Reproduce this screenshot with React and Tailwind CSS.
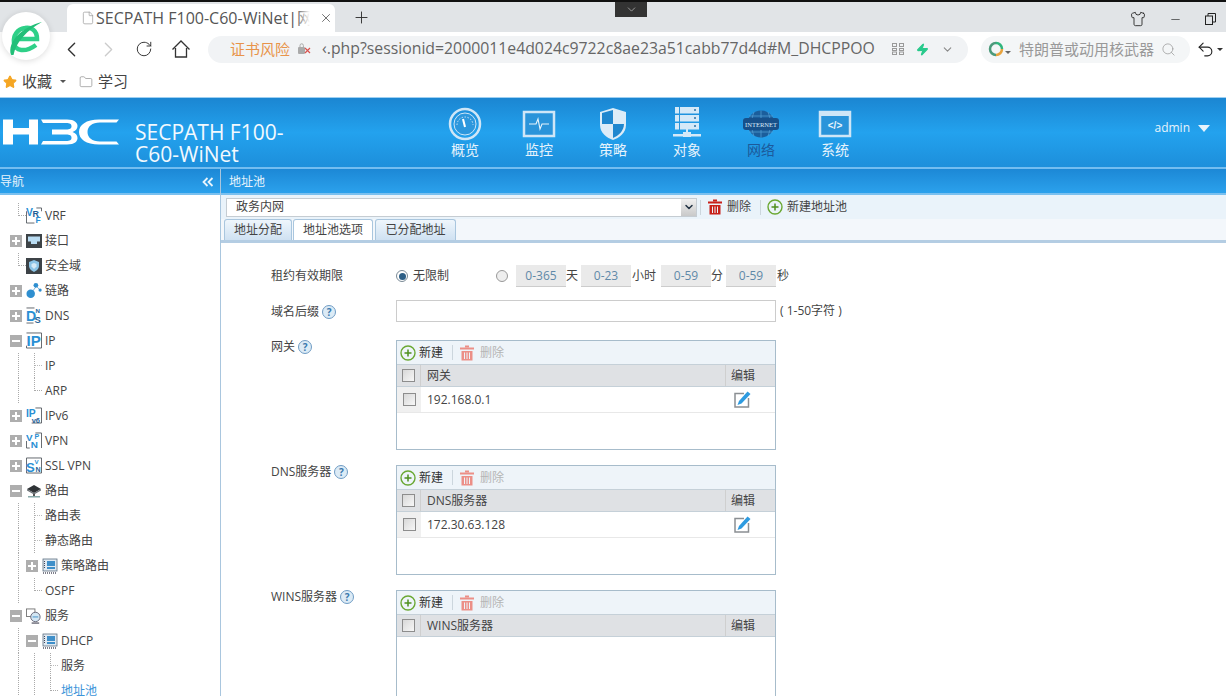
import React from "react";
import { ChevronLeft, ChevronRight, ChevronDown, RotateCw, Star, Folder, File, X, Plus, Minus, Search, Undo2, Zap, Shirt } from "lucide-react";

function Logo360() {
  return (
    <svg width="48" height="48" viewBox="0 0 48 48" className="absolute left-[2px] top-[12px] rounded-full bg-white shadow-[0_1px_6px_rgba(0,0,0,0.14)]">
      <path d="M13 27H35C35 18 29 15 23 16C15 17 11 24 12 31C13 39 23 41 34 33" fill="none" stroke="#2fd088" strokeWidth="4.500" />
      <path d="M9 43C5 30 20 15 40 10C25 18 14 30 11.500 43Z" fill="#22bf78" />
    </svg>
  );
}

function HouseIcon() {
  return (
    <svg width="20" height="20" viewBox="0 0 20 20" fill="none" stroke="#333" strokeWidth="1.300">
      <path d="M1.500 10.500L10 2L18.500 10.500M4.500 9V18H15.500V9" />
    </svg>
  );
}

function QrIcon() {
  return (
    <svg width="12" height="12" viewBox="0 0 12 12" fill="none" stroke="#999" strokeWidth="1">
      <rect x="0.500" y="0.500" width="4" height="3" /><rect x="7.500" y="0.500" width="4" height="3" />
      <rect x="0.500" y="5.500" width="4" height="2" /><rect x="7.500" y="5.500" width="4" height="2" />
      <rect x="0.500" y="9" width="4" height="2.500" /><rect x="7.500" y="9" width="4" height="2.500" />
    </svg>
  );
}

function BrowserChrome() {
  return (
    <div className="relative">
      <div className="h-[2px] bg-[#111]" />
      <div className="flex h-[30px] items-end bg-[#e1e4e7] pl-[67px]">
        <div className="flex h-[28px] w-[268px] items-center rounded-t-md bg-white pl-[14px] text-[16px] text-[#555]">
          <File size={14} strokeWidth={1.200} color="#999" />
          <span className="relative ml-[1px] w-[214px] overflow-hidden whitespace-nowrap">
            SECPATH F100-C60-WiNet|网络
            <span className="absolute inset-y-0 right-0 w-[14px] bg-gradient-to-l from-white to-transparent" />
          </span>
          <X size={14} strokeWidth={1.400} color="#555" className="ml-[9px]" />
        </div>
        <Plus size={19} strokeWidth={1.200} color="#333" className="mb-[5px] ml-[17px]" />
        <div className="flex-1" />
        <div className="mb-[5px] flex items-center gap-[23px] pr-[10px]">
          <Shirt size={16} strokeWidth={1.300} color="#222" />
          <Minus size={13} strokeWidth={1.200} color="#222" />
          <svg width="11" height="12" viewBox="0 0 11 12" fill="none" stroke="#222"><rect x="0.500" y="3" width="7" height="8.500" /><path d="M3 3V0.500H10.500V9H7.500" /></svg>
        </div>
      </div>
      <div className="flex h-[34px] items-center bg-white">
        <ChevronLeft size={25} strokeWidth={1.300} color="#333" className="ml-[59px]" />
        <ChevronRight size={25} strokeWidth={1.300} color="#ccc" className="ml-[12px]" />
        <RotateCw size={18} strokeWidth={1.300} color="#333" className="ml-[14px]" />
        <span className="ml-[18px]"><HouseIcon /></span>
        <div className="ml-[17px] flex h-[27px] w-[760px] items-center rounded-full bg-[#f1f3f5] pl-[22px]">
          <span className="whitespace-nowrap text-[15px] text-[#e8934a]">证书风险</span>
          <svg width="14" height="12" viewBox="0 0 14 12" className="ml-[8px]"><rect x="0" y="4" width="7" height="7" fill="#aaa" rx="1" /><path d="M2 4V2.500a1.700 1.700 0 0 1 3.400 0V4" fill="none" stroke="#aaa" /><path d="M7 5l5 5M12 5l-5 5" stroke="#d9534f" strokeWidth="1.200" /></svg>
          <span className="ml-[10px] w-[555px] overflow-hidden whitespace-nowrap text-[15.800px] text-[#666]">‹.php?sessionid=2000011e4d024c9722c8ae23a51cabb77d4d#M_DHCPPOO</span>
          <span className="ml-[15px]"><QrIcon /></span>
          <Zap size={13} className="ml-[12px]" fill="#27c98b" stroke="#27c98b" />
          <ChevronDown size={13} color="#888" className="ml-[12px]" />
        </div>
        <div className="ml-[13px] flex h-[27px] w-[209px] items-center rounded-full bg-[#f4f6f7] pl-[7px]">
          <svg width="16" height="16" viewBox="0 0 16 16" fill="none" strokeWidth="2.500"><path d="M8 2a6 6 0 0 1 6 6" stroke="#31b57d" /><path d="M14 8a6 6 0 0 1-6 6" stroke="#e8a33d" /><path d="M8 14A6 6 0 0 1 8 2" stroke="#4c9a7b" /></svg>
          <span className="ml-[1px] mt-[6px] h-0 w-0 border-x-[3px] border-t-[3px] border-x-transparent border-t-[#666]" />
          <span className="ml-[8px] whitespace-nowrap text-[15px] text-[#999]">特朗普或动用核武器</span>
          <Search size={15} strokeWidth={1.200} color="#999" className="ml-[7px]" />
        </div>
        <Undo2 size={19} strokeWidth={1.400} color="#222" className="ml-[6px]" />
        <span className="ml-[2px] h-0 w-0 border-x-[3px] border-t-[3px] border-x-transparent border-t-[#333]" />
      </div>
      <div className="flex h-[31px] items-center bg-white pl-[3px] text-[15px] text-[#444]">
        <Star size={14} fill="#f5a623" stroke="#f5a623" />
        <span className="ml-[5px]">收藏</span>
        <span className="ml-[8px] h-0 w-0 border-x-[3px] border-t-[3px] border-x-transparent border-t-[#555]" />
        <Folder size={14} strokeWidth={1} color="#777" className="ml-[13px]" />
        <span className="ml-[5px]">学习</span>
      </div>
      <Logo360 />
      <div className="absolute left-[615px] top-[2px] flex h-[15px] w-[32px] items-center justify-center bg-[#333]">
        <ChevronDown size={13} strokeWidth={1.200} color="#ccc" />
      </div>
    </div>
  );
}

function H3CLogo() {
  return (
    <svg width="120" height="26" viewBox="0 0 120 26" fill="#fff">
      <path d="M3 0.500H13V9H29V0.500H38V25.500H29V15.500H13V25.500H3Z" />
      <path d="M41 0.500H67C75 0.500 77.500 4 77.500 7C77.500 10 75.500 12 72.500 13C75.500 14 77.500 16 77.500 19C77.500 22 75 25.500 67 25.500H41L43 22H66C70 22 71.500 21 71.500 18.800C71.500 16.500 70 15.500 66 15.500H52V10.500H66C70 10.500 71.500 9.500 71.500 7.200C71.500 5 70 4 66 4H43Z" />
      <path d="M119 0.500H99C86 0.500 79 6 79 13C79 20 86 25.500 99 25.500H119L116.500 22.500H100C92 22.500 87.500 18.500 87.500 13C87.500 7.500 92 3.500 100 3.500H116.500Z" />
    </svg>
  );
}

const c1 = "#cfe6f7";
function NavGauge() {
  return (
    <svg width="34" height="34" viewBox="0 0 34 34" fill="none">
      <circle cx="17" cy="17" r="15" stroke={c1} strokeWidth="2.500" />
      <circle cx="17" cy="17" r="11" fill="#2c97dd" stroke={c1} strokeWidth="1" />
      <path d="M9 18a8 8 0 0 1 16 0" stroke={c1} strokeDasharray="1.500 1.500" />
      <path d="M15 12l2 8" stroke="#fff" strokeWidth="2" />
    </svg>
  );
}
function NavMonitor() {
  return (
    <svg width="34" height="30" viewBox="0 0 34 30" fill="none">
      <rect x="2" y="3" width="30" height="24" fill="#2a94da" stroke={c1} strokeWidth="2.500" />
      <path d="M7 15H14L16 10L18 20L20 15H27" stroke="#e8f4fc" strokeWidth="1.100" />
    </svg>
  );
}
function NavShield() {
  return (
    <svg width="28" height="34" viewBox="0 0 28 34">
      <path d="M14 1L27 5V18C27 26 20 31 14 33C8 31 1 26 1 18V5Z" fill="#dcecf8" />
      <path d="M14 5V17H3V6L14 3Z" fill="#1f87cf" />
      <path d="M14 17H25C25 24 19 29 14 31Z" fill="#1f87cf" />
    </svg>
  );
}
function NavServer() {
  return (
    <svg width="28" height="34" viewBox="0 0 28 34" fill="#d5e9f8">
      <rect x="2" y="0" width="24" height="6.500" /><rect x="2" y="8" width="24" height="6.500" /><rect x="2" y="16" width="24" height="6.500" />
      <rect x="6" y="0" width="1" height="23" fill="#2a94da" />
      <circle cx="22" cy="3" r="1" fill="#2a6fa5" /><circle cx="22" cy="11" r="1" fill="#2a6fa5" /><circle cx="22" cy="19" r="1" fill="#2a6fa5" />
      <rect x="13" y="22" width="2" height="5" /><rect x="0" y="27" width="10" height="2.500" /><rect x="10" y="25" width="8" height="5" /><rect x="18" y="27" width="10" height="2.500" />
    </svg>
  );
}
function NavGlobe() {
  return (
    <svg width="36" height="30" viewBox="0 0 36 30" fill="none">
      <circle cx="18" cy="15" r="13.500" fill="#1b5e9c" />
      <path d="M18 1.500V28.500M11 3C8 10 8 20 11 27M25 3C28 10 28 20 25 27M6 7H30M6 23H30" stroke="#58a3d8" strokeWidth="0.700" />
      <rect x="0" y="9" width="36" height="12" rx="3" fill="#17508a" />
      <text x="18" y="17.500" textAnchor="middle" fontSize="6.500" fill="#d9ecf9" fontFamily="Liberation Serif, serif">INTERNET</text>
    </svg>
  );
}
function NavWindow() {
  return (
    <svg width="34" height="30" viewBox="0 0 34 30" fill="none">
      <rect x="2" y="3" width="30" height="24" fill="#2a94da" stroke={c1} strokeWidth="2.500" />
      <rect x="2" y="2" width="30" height="5" fill={c1} />
      <text x="17" y="20" textAnchor="middle" fontSize="10" fontWeight="700" fill="#e8f4fc" fontFamily="Liberation Sans, sans-serif">&lt;/&gt;</text>
    </svg>
  );
}

const navs = [
  { label: "概览", icon: <NavGauge /> },
  { label: "监控", icon: <NavMonitor /> },
  { label: "策略", icon: <NavShield /> },
  { label: "对象", icon: <NavServer /> },
  { label: "网络", icon: <NavGlobe />, active: true },
  { label: "系统", icon: <NavWindow /> },
];

function Header() {
  return (
    <div className="flex h-[72px] items-start border-t border-[#9ed0f2] border-b-2 border-b-[#73bdf0] bg-gradient-to-b from-[#1b86d2] via-[#23a2ee] to-[#1d8fdb]">
      <div className="mt-[21px] shrink-0"><H3CLogo /></div>
      <div className="ml-[15px] mt-[23px] w-[170px] text-[21px] leading-[22px] text-[#f2f9fe]">SECPATH F100-C60-WiNet</div>
      <div className="ml-[123px] flex">
        {navs.map((n) => (
          <div key={n.label} className="flex w-[74px] flex-col items-center">
            <div className="mt-[8px] flex h-[36px] items-center">{n.icon}</div>
            <div className={`-mt-[2px] text-[14px] leading-[20px] ${n.active ? "text-[#1c5a9b]" : "text-[#e6f3fc]"}`}>{n.label}</div>
          </div>
        ))}
      </div>
      <div className="flex-1" />
      <div className="mr-[16px] mt-[21px] flex items-center text-[12px] text-[#e6f3fc]">
        admin
        <span className="ml-[8px] h-0 w-0 border-x-[6px] border-t-[7px] border-x-transparent border-t-[#e6f3fc]" />
      </div>
    </div>
  );
}

function Guide({ kind }) {
  if (kind === "line") return <div className="h-full w-[16px] shrink-0"><div className="ml-[8px] h-full border-l border-dotted border-[#aaa]" /></div>;
  if (kind === "tee") return <div className="h-full w-[16px] shrink-0"><div className="ml-[8px] h-full border-l border-dotted border-[#aaa]"><div className="h-1/2 border-b border-dotted border-[#bbb]" /></div></div>;
  if (kind === "end") return <div className="h-full w-[16px] shrink-0"><div className="ml-[8px] h-1/2 border-b border-l border-dotted border-[#aaa]" /></div>;
  return <div className="w-[16px] shrink-0"><div className="relative h-[12px] w-[12px] bg-[#aeaeae]"><span className="absolute left-[2px] top-[5px] h-[2px] w-[8px] bg-white" />{kind === "plus" && <span className="absolute left-[5px] top-[2px] h-[8px] w-[2px] bg-white" />}</div></div>;
}

const blue = "#2a8fd4";
const navy = "#1f5f96";
function LetterIcon({ letters, frame = "M10 0.500H16.500V16.500H0.500V11" }) {
  return (
    <svg width="17" height="17" viewBox="0 0 17 17" fill="none">
      <path d={frame} stroke="#4a4f55" strokeWidth="0.900" />
      {letters.map(([c, x, y, s, f], i) => (
        <text key={i} x={x} y={y} fontSize={s} fontWeight="700" fill={f || blue} fontFamily="Liberation Sans, sans-serif">{c}</text>
      ))}
    </svg>
  );
}
const IconIf = () => (
  <svg width="16" height="14" viewBox="0 0 16 14"><rect width="16" height="14" fill="#3d4347" /><path d="M2 2.500H14V7.500H11V10H5V7.500H2Z" fill="#b9dcf2" /></svg>
);
const IconSec = () => (
  <svg width="16" height="16" viewBox="0 0 16 16"><rect width="16" height="16" fill="#3d4347" /><path d="M8 2L13 4V8C13 11 10 13 8 14C6 13 3 11 3 8V4Z" fill="#8cc4e6" /><path d="M8 5L10.500 6V8.500L8 11L5.500 8.500V6Z" fill="#d6eaf6" /></svg>
);
const IconLink = () => (
  <svg width="17" height="17" viewBox="0 0 17 17"><path d="M5 12L11 4L15 8" fill="none" stroke="#7ab0d4" /><circle cx="5" cy="12" r="4.500" fill="#2f8fd0" /><circle cx="10.500" cy="3" r="2.500" fill="#2f8fd0" /><circle cx="15" cy="8" r="1.700" fill="#2f8fd0" /></svg>
);
const IconRoute = () => (
  <svg width="16" height="14" viewBox="0 0 16 14"><path d="M8 1L15 5L8 9L1 5Z" fill="#2f3336" /><path d="M1 5L8 9L15 5V6.500L8 10.500L1 6.500Z" fill="#6d7378" /><rect x="7" y="10" width="2" height="2" fill="#555" /><rect x="2" y="12" width="12" height="1.500" fill="#8aa" /></svg>
);
const IconChip = () => (
  <svg width="16" height="16" viewBox="0 0 16 16"><rect x="1" y="1" width="14" height="12" fill="#dfe9f2" stroke="#5d6f80" strokeWidth="0.800" /><rect x="5" y="3" width="8" height="5" fill="#3f8fc9" /><rect x="5" y="9" width="8" height="2" fill="#3f8fc9" /><path d="M2.500 3V11" stroke="#445" strokeDasharray="1 1" /><path d="M1 15H15" stroke="#556" strokeDasharray="1 1" strokeWidth="1.500" /></svg>
);
const IconSvc = () => (
  <svg width="17" height="16" viewBox="0 0 17 16" fill="none"><rect x="0.500" y="0.500" width="9" height="8" stroke="#777" fill="#fff" /><circle cx="10" cy="9" r="5" fill="#d3e6f3" stroke="#667" /><path d="M7 9H13" stroke="#3f8fc9" /><path d="M6 15.500H14" stroke="#445" strokeWidth="1.200" /></svg>
);

const tree = [
  { g: ["end"], icon: <LetterIcon letters={[["V", 0, 9, 11], ["R", 7, 10, 9.500, navy], ["F", 10, 16, 9]]} frame="M0.500 4V16.500H9M11 0.500H16.500V4" />, t: "VRF" },
  { g: ["plus"], icon: <IconIf />, t: "接口" },
  { g: ["end"], icon: <IconSec />, t: "安全域" },
  { g: ["plus"], icon: <IconLink />, t: "链路" },
  { g: ["plus"], icon: <LetterIcon letters={[["D", 0, 14, 15], ["N", 10, 6, 6.500, navy], ["S", 9, 16, 10, navy]]} frame="M0.500 0.500H9M0.500 16.500H8" />, t: "DNS" },
  { g: ["minus"], icon: <LetterIcon letters={[["IP", 0.500, 14, 16]]} frame="M0.500 0.500H16.500M16.500 0.500V16.500H0.500V14" />, t: "IP" },
  { g: ["line", "tee"], t: "IP" },
  { g: ["line", "end"], t: "ARP" },
  { g: ["plus"], icon: <LetterIcon letters={[["IP", 0, 10, 11], ["v6", 6, 16, 8, navy]]} frame="M10 0.500H16.500V16.500H6" />, t: "IPv6" },
  { g: ["plus"], icon: <LetterIcon letters={[["V", 0, 9, 10.500], ["P", 9, 7, 7.500], ["N", 5, 16.500, 10.500]]} frame="M0.500 9V16.500H4M10 0.500H16.500V16.500" />, t: "VPN" },
  { g: ["plus"], icon: <LetterIcon letters={[["S", 0, 15, 14, blue], ["V", 9, 6.500, 6.500], ["N", 10, 15.500, 7.500, navy]]} frame="M0.500 0.500H16.500V16.500H0.500Z" />, t: "SSL VPN" },
  { g: ["minus"], icon: <IconRoute />, t: "路由" },
  { g: ["line", "tee"], t: "路由表" },
  { g: ["line", "tee"], t: "静态路由" },
  { g: ["line", "plus"], icon: <IconChip />, t: "策略路由" },
  { g: ["line", "end"], t: "OSPF" },
  { g: ["minus"], icon: <IconSvc />, t: "服务" },
  { g: ["line", "minus"], icon: <IconChip />, t: "DHCP" },
  { g: ["line", "line", "tee"], t: "服务" },
  { g: ["line", "line", "end"], t: "地址池", on: true },
];

function Sidebar() {
  return (
    <div className="w-[221px] shrink-0 border-r border-[#a9c6de] bg-white">
      <div className="flex h-[26px] items-center justify-between border-b-2 border-b-[#7ac0ef] bg-gradient-to-b from-[#1c88d6] to-[#2ba1ec] pr-[6px] pt-[1px] text-[12px] text-[#e8f4fc]">
        <span>导航</span>
        <svg width="12" height="10" viewBox="0 0 12 10" fill="none" stroke="#e8f4fc" strokeWidth="1.800"><path d="M5.500 1L1.500 5L5.500 9M10.500 1L6.500 5L10.500 9" /></svg>
      </div>
      <div className="pt-[8px]">
        {tree.map((r, i) => (
          <div key={i} className="flex h-[25px] items-center pl-[10px] text-[12px] text-[#444]">
            {r.g.map((k, j) => <Guide key={j} kind={k} />)}
            {r.icon && <div className="flex w-[16px] shrink-0 items-center justify-center">{r.icon}</div>}
            <span className={`ml-[3px] whitespace-nowrap ${r.on ? "text-[#3b94d9]" : ""}`}>{r.t}</span>
          </div>
        ))}
      </div>
    </div>
  );
}

function AddIcon({ size = 16 }) {
  return (
    <svg width={size} height={size} viewBox="0 0 16 16" fill="none"><circle cx="8" cy="8" r="7" stroke="#6aa832" strokeWidth="1.400" /><path d="M4.500 8H11.500M8 4.500V11.500" stroke="#4e8f1d" strokeWidth="1.500" /></svg>
  );
}
function TrashIcon({ color }) {
  return (
    <svg width="14" height="16" viewBox="0 0 14 16" fill={color}><rect x="0" y="2.500" width="14" height="2" /><rect x="5" y="0.500" width="4" height="2" /><path d="M1.500 6H12.500V15.500H1.500ZM4 7.500V14H5V7.500ZM6.500 7.500V14H7.500V7.500ZM9 7.500V14H10V7.500Z" fillRule="evenodd" /></svg>
  );
}
function EditIcon() {
  return (
    <svg width="17" height="17" viewBox="0 0 17 17" fill="none">
      <path d="M10 2.500H1V16H14.500V7" stroke="#8b8f93" strokeWidth="1.500" />
      <path d="M13.500 0.500L16.500 3L7.500 12.500L3.500 14L5 10Z" fill="#2e9be0" />
    </svg>
  );
}
function Help() {
  return (
    <span className="ml-[3px] flex h-[14px] w-[14px] items-center justify-center rounded-full border border-[#6f9cc4] bg-[#dcebf6] text-[10px] font-bold leading-none text-[#3a78ad]">?</span>
  );
}
function CheckBox() {
  return <span className="block h-[13px] w-[13px] border border-[#8d8d8d] bg-gradient-to-br from-[#d8d8d8] to-[#f7f7f7]" />;
}
function NumBox({ t }) {
  return <span className="flex h-[22px] w-[50px] items-center justify-center border-b border-[#ccc] bg-[#eaeaea] text-[12px] text-[#5f89a8]">{t}</span>;
}

function ListTable({ name, value }) {
  return (
    <div className="h-[110px] w-[380px] border border-[#a7bccb]">
      <div className="flex h-[23px] items-center bg-[#eef4f9] pl-[3px] text-[12px]">
        <AddIcon />
        <span className="ml-[3px] text-[#333]">新建</span>
        <span className="ml-[9px] h-[15px] border-l border-[#ccd6dd]" />
        <span className="ml-[7px]"><TrashIcon color="#ec8f87" /></span>
        <span className="ml-[6px] text-[#b5b5b5]">删除</span>
      </div>
      <div className="flex h-[23px] items-center border-y border-[#c5d0d8] bg-[#dfe1e4] text-[12px] text-[#444]">
        <span className="flex h-full w-[24px] items-center justify-center border-r border-[#cfcfcf]"><CheckBox /></span>
        <span className="flex-1 pl-[6px]">{name}</span>
        <span className="flex h-full w-[50px] items-center border-l border-[#cfcfcf] pl-[5px]">编辑</span>
      </div>
      {value && (
        <div className="flex h-[26px] items-center border-b border-[#e8e8e8] text-[12px] text-[#444]">
          <span className="flex h-full w-[24px] items-center justify-center bg-[#f0f0f0]"><CheckBox /></span>
          <span className="flex-1 pl-[6px]">{value}</span>
          <span className="flex w-[50px] items-center pl-[9px]"><EditIcon /></span>
        </div>
      )}
    </div>
  );
}

function Field({ label, children, className, labelClass = "" }) {
  return (
    <div className={`flex ${className}`}>
      <div className={`flex h-[16px] w-[125px] shrink-0 items-center whitespace-nowrap text-[12px] text-[#444] ${labelClass}`}>{label}<Help /></div>
      {children}
    </div>
  );
}

function Main() {
  return (
    <div className="min-w-0 flex-1 bg-white">
      <div className="flex h-[26px] items-center border-b-2 border-b-[#7ac0ef] bg-gradient-to-b from-[#1c88d6] to-[#2ba1ec] pl-[8px] pt-[1px] text-[12px] text-[#e8f4fc]">地址池</div>
      <div className="flex h-[24px] items-center bg-[#eaf3fa] pl-[5px] text-[12px] text-[#444]">
        <div className="flex h-[19px] w-[471px] items-center justify-between border border-[#c5ccd2] bg-white pl-[9px]">
          <span>政务内网</span>
          <span className="flex h-full w-[15px] items-center justify-center bg-gradient-to-b from-[#f0f0f0] to-[#c9c9c9]">
            <ChevronDown size={12} strokeWidth={3} color="#234" />
          </span>
        </div>
        <span className="ml-[3px] h-[15px] border-l border-[#ccd6dd]" />
        <span className="ml-[7px]"><TrashIcon color="#c8211a" /></span>
        <span className="ml-[5px]">删除</span>
        <span className="ml-[9px] h-[15px] border-l border-[#ccd6dd]" />
        <span className="ml-[6px]"><AddIcon /></span>
        <span className="ml-[4px]">新建地址池</span>
      </div>
      <div className="flex h-[24px] items-end border-b-[3px] border-b-[#b4cde3] bg-[#f3f7fb] pl-[3px] text-[12px] text-[#444]">
        <span className="flex h-[21px] w-[68px] items-center justify-center rounded-t-[3px] border border-b-0 border-[#a9c6de] bg-gradient-to-b from-[#eff6fc] to-[#cfe1f2]">地址分配</span>
        <span className="ml-[1px] flex h-[21px] w-[80px] items-center justify-center rounded-t-[3px] border border-b-0 border-[#a9c6de] bg-white">地址池选项</span>
        <span className="ml-[2px] flex h-[21px] w-[81px] items-center justify-center rounded-t-[3px] border border-b-0 border-[#a9c6de] bg-gradient-to-b from-[#eff6fc] to-[#cfe1f2]">已分配地址</span>
      </div>
      <div className="pl-[50px]">
        <div className="mt-[22px] flex items-center text-[12px] text-[#444]">
          <div className="w-[125px] shrink-0">租约有效期限</div>
          <span className="flex h-[12px] w-[12px] items-center justify-center rounded-full border border-[#7a8a96] bg-white"><span className="h-[7px] w-[7px] rounded-full bg-[#2d5f86]" /></span>
          <span className="ml-[5px] w-[83px]">无限制</span>
          <span className="h-[12px] w-[12px] rounded-full border border-[#999] bg-[#eee]" />
          <span className="ml-[8px]"><NumBox t="0-365" /></span>
          <span className="w-[15px]">天</span>
          <NumBox t="0-23" />
          <span className="ml-[1px] w-[24px]">小时</span>
          <span className="ml-[5px]"><NumBox t="0-59" /></span>
          <span className="w-[15px]">分</span>
          <NumBox t="0-59" />
          <span className="ml-[1px]">秒</span>
        </div>
        <Field label="域名后缀" labelClass="pt-[2px]" className="mt-[13px] items-center">
          <span className="h-[22px] w-[380px] border border-[#ccc] bg-white" />
          <span className="ml-[4px] text-[12px] text-[#444]">( 1-50字符 )</span>
        </Field>
        <Field label="网关" labelClass="-mt-[1px]" className="mt-[18px]"><ListTable name="网关" value="192.168.0.1" /></Field>
        <Field label="DNS服务器" labelClass="-mt-[1px]" className="mt-[15px]"><ListTable name="DNS服务器" value="172.30.63.128" /></Field>
        <Field label="WINS服务器" labelClass="-mt-[1px]" className="mt-[15px]"><ListTable name="WINS服务器" /></Field>
      </div>
    </div>
  );
}

export default function App() {
  return (
    <div className="h-[696px] w-[1226px] overflow-hidden bg-white font-['Open_Sans','Noto_Sans_CJK_SC',sans-serif]">
      <BrowserChrome />
      <Header />
      <div className="flex">
        <Sidebar />
        <Main />
      </div>
    </div>
  );
}
